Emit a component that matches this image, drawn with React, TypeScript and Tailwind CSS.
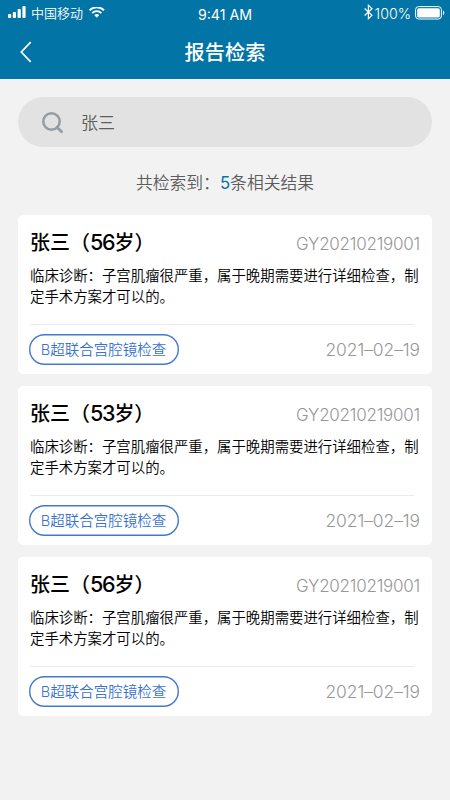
interface Report {
    name: string;
    age: number;
    code: string;
    diagnosis: string;
    tag: string;
    date: string;
}

const diagnosis = "临床诊断：子宫肌瘤很严重，属于晚期需要进行详细检查，制定手术方案才可以的。";

const reports: Report[] = [
    { name: "张三", age: 56, code: "GY20210219001", diagnosis, tag: "B超联合宫腔镜检查", date: "2021–02–19" },
    { name: "张三", age: 53, code: "GY20210219001", diagnosis, tag: "B超联合宫腔镜检查", date: "2021–02–19" },
    { name: "张三", age: 56, code: "GY20210219001", diagnosis, tag: "B超联合宫腔镜检查", date: "2021–02–19" },
];

const App = () => {
    return (
        <div className="w-[450px] h-[800px] overflow-hidden bg-[#f2f2f2] font-['Inter','Noto_Sans_CJK_SC',sans-serif]">
            <header className="h-[79px] bg-[#0274a5] text-white">
                <StatusBar />
                <NavBar />
            </header>

            <main className="px-[18px] pt-[18px]">
                <div className="h-[50px] rounded-full bg-[#e2e2e2] flex items-center pl-6">
                    <SearchIcon />
                    <span className="ml-[17px] pt-[2px] text-[17px] leading-6 font-[350] text-[#5c5c5c]">张三</span>
                </div>

                <p className="mt-6 h-6 text-center text-[16.8px] leading-6 font-[350] text-[#5c5c5c] whitespace-nowrap">
                    共检索到：<span className="font-normal text-[#0274a5]">5</span>条相关结果
                </p>

                <div className="mt-5 flex flex-col gap-3">
                    {reports.map((report, i) => (
                        <ReportCard key={i} report={report} />
                    ))}
                </div>
            </main>
        </div>
    );
};
export default App;

function StatusBar() {
    return (
        <div className="h-[26px] grid grid-cols-3 items-center pl-2 pr-[5px]">
            <div className="flex items-center">
                <SignalIcon />
                <span className="ml-[5px] mb-px text-[13px] leading-4 font-[350]">中国移动</span>
                <WifiIcon />
            </div>
            <div className="pt-[3px] -ml-[3px] text-center text-[14.2px] leading-4 font-normal">9:41 AM</div>
            <div className="flex items-center justify-end">
                <BluetoothIcon />
                <span className="ml-[2px] mr-1 pt-[2px] text-[14.2px] leading-4 font-light">100%</span>
                <BatteryIcon />
            </div>
        </div>
    );
}

function NavBar() {
    return (
        <div className="h-[53px] grid grid-cols-[40px_1fr_40px] items-center">
            <svg className="ml-5 mb-[2px]" width="12" height="22" viewBox="0 0 12 22" fill="none" stroke="currentColor" strokeWidth="1.7">
                <path d="M10.7 1.2 1.3 11l9.4 9.8" />
            </svg>
            <h1 className="text-center text-[20.2px] leading-7 font-medium">报告检索</h1>
        </div>
    );
}

function ReportCard({ report }: { report: Report }) {
    return (
        <article className="h-[159px] rounded-[5px] bg-white px-3 pt-[13px]">
            <div className="h-7 flex items-center justify-between whitespace-nowrap">
                <h2 className="h-7 text-[20px] leading-7 font-medium text-black font-['Noto_Sans_CJK_SC','Inter',sans-serif]">
                    {report.name}（<span className="font-['Inter'] text-[21.5px] leading-none font-[450] tracking-[-1.2px]">{report.age}</span>岁）
                </h2>
                <span className="pt-1 text-[17px] leading-6 font-[350] tracking-[-0.25px] text-[#979797]">{report.code}</span>
            </div>
            <p className="mt-[9px] w-[392px] h-11 text-[14.4px] leading-[21px] font-[350] text-black break-all">{report.diagnosis}</p>
            <div className="mt-[15px] mr-[6px] h-px bg-[#ebebeb]" />
            <div className="mt-[9px] flex items-center justify-between">
                <span className="-ml-px w-[150px] h-[31px] rounded-full shadow-[inset_0_0_0_1.4px_#4078d2] flex items-center justify-center pr-px text-[14.5px] leading-5 font-[350] text-[#3a72cf] whitespace-nowrap">
                    {report.tag}
                </span>
                <span className="text-[17.4px] leading-6 font-[350] tracking-[-0.05px] text-[#979797]">{report.date}</span>
            </div>
        </article>
    );
}

function SearchIcon() {
    return (
        <svg className="mt-px" width="22" height="22" viewBox="0 0 22 22" fill="none" stroke="#959ca2" strokeWidth="2.5">
            <circle cx="9.5" cy="9.5" r="8.2" />
            <path d="m15 15.2 4.6 4.6" strokeWidth="2.8" strokeLinecap="round" />
        </svg>
    );
}

function SignalIcon() {
    return (
        <svg className="mb-[3px]" width="18" height="12" viewBox="0 0 18 12" fill="currentColor">
            <rect x="0" y="8" width="3.2" height="4" rx="0.8" />
            <rect x="4.8" y="6" width="3.2" height="6" rx="0.8" />
            <rect x="9.6" y="3" width="3.2" height="9" rx="0.8" />
            <rect x="14.4" y="0" width="3.2" height="12" rx="0.8" />
        </svg>
    );
}

function WifiIcon() {
    return (
        <svg className="ml-[6px] mb-px" width="15.5" height="11" viewBox="0.5 1 16 11" fill="none" stroke="currentColor" strokeWidth="1.9">
            <path d="M1 4.2a10.7 10.7 0 0 1 15 0" />
            <path d="M3.7 7.1a6.9 6.9 0 0 1 9.6 0" />
            <path d="M8.5 11.8 5.9 9.2a3.8 3.8 0 0 1 5.2 0z" fill="currentColor" stroke="none" />
        </svg>
    );
}

function BluetoothIcon() {
    return (
        <svg className="mb-[3px]" width="9" height="16" viewBox="0 0 9 16" fill="none" stroke="currentColor" strokeWidth="1.2">
            <path d="M.6 4.5 8 11.2l-3.6 3.5V1.3L8 4.8.6 11.5" />
        </svg>
    );
}

function BatteryIcon() {
    return (
        <svg className="mb-px" width="30" height="14" viewBox="0 0 30 14" fill="none">
            <rect x="0.6" y="0.6" width="25.8" height="12.4" rx="3" stroke="currentColor" strokeWidth="1" />
            <rect x="2.2" y="2.2" width="22.6" height="9.2" rx="1.5" fill="currentColor" />
            <path d="M28 4.6c1.8.8 1.8 3.8 0 4.6z" fill="currentColor" />
        </svg>
    );
}
